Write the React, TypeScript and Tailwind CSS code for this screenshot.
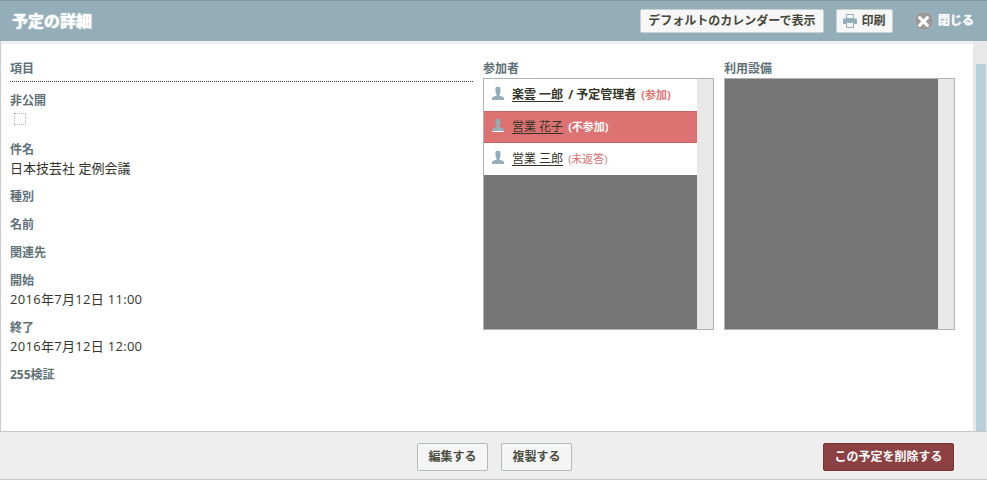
const jp = "font-['Open_Sans','Noto_Sans_CJK_JP',sans-serif]";

function Field({ label, value, date }: { label: string; value?: string; date?: boolean }) {
  return (
    <div className="mb-[9px]">
      <div className="h-[19px] text-[12px] leading-[19px] font-bold text-[#5e6f78]">{label}</div>
      {value && (
        <div className={`h-[19px] text-[13px] leading-[19px] text-[#33352a] ${date ? "tracking-[0.3px]" : ""}`}>
          {value}
        </div>
      )}
    </div>
  );
}

function PersonIcon({ active }: { active?: boolean }) {
  return (
    <svg
      viewBox="0 0 12 13"
      className={`w-3 h-[13px] shrink-0 -mt-[3px] fill-[#93adb9] ${active ? "border-b border-white" : ""}`}
    >
      <path d="M4 0h4l0.500 1v4.500L7.500 7.500v1.300l3.500 1 1 1V13H0v-2.200l1-1 3.500-1V7.500L3.500 5.500V1z" />
    </svg>
  );
}

function Attendee({
  name,
  role,
  status,
  active,
}: {
  name: string;
  role?: string;
  status: string;
  active?: boolean;
}) {
  return (
    <div
      className={`h-8 flex items-center pl-2 text-[12px] ${
        active ? "bg-[#dc7271] border-y border-[#c96463]" : "bg-white"
      }`}
    >
      <PersonIcon active={active} />
      <span
        className={`ml-[8px] underline underline-offset-2 text-[#33352a] ${role ? "font-bold" : ""}`}
      >
        {name}
      </span>
      {role && <span className="ml-[5px] font-bold text-[#33352a]">/ {role}</span>}
      <span
        className={`ml-[5px] text-[11px] ${active ? "text-white font-bold" : "text-[#dc7271]"} ${
          role ? "font-bold" : ""
        }`}
      >
        {status}
      </span>
    </div>
  );
}

function ListBox({ label, children }: { label: string; children?: React.ReactNode }) {
  return (
    <div className="w-[231px]">
      <div className="h-[19px] text-[12px] leading-[19px] font-bold text-[#5e6f78]">{label}</div>
      <div className="h-[252px] flex border border-[#b0b3b3]">
        <div className="flex-1 bg-[#757575]">{children}</div>
        <div className="w-[16px] bg-[#e8e8e8]" />
      </div>
    </div>
  );
}

function Button({ children, danger }: { children: React.ReactNode; danger?: boolean }) {
  return (
    <button
      className={`h-[28px] rounded-[2px] border text-[12px] font-bold flex items-center justify-center ${
        danger
          ? "w-[131px] bg-[#8b4142] border-[#7a3334] text-white"
          : "w-[71px] bg-[#f5f5f5] border-[#b5baba] text-[#4a4d3e]"
      }`}
    >
      {children}
    </button>
  );
}

export default function App() {
  return (
    <div className={`${jp} w-[987px] h-[480px] flex flex-col overflow-hidden bg-white`}>
      <header className="h-[41px] shrink-0 flex items-center pl-3 bg-[#93adb9] border-t border-[#7f97a2]">
        <h1 className="text-[16px] font-bold text-white [text-shadow:0_0_1px_#fff,0_0_2px_rgba(255,255,255,0.7)]">
          予定の詳細
        </h1>
        <button className="ml-auto w-[184px] h-6 bg-[#f6f6f6] border border-[#c9d1d3] rounded-[2px] text-[12px] font-bold text-[#44463a]">
          デフォルトのカレンダーで表示
        </button>
        <button className="ml-[12px] w-[57px] h-6 flex items-center justify-center gap-[4px] bg-[#f6f6f6] border border-[#c9d1d3] rounded-[2px] text-[12px] font-bold text-[#44463a]">
          <svg viewBox="0 0 14 14" className="w-[14px] h-[14px]">
            <path d="M3.500 0.500h7v4h-7z" fill="none" stroke="#93adb9" />
            <path d="M1 4.500h12a1 1 0 0 1 1 1V10h-3V8H3v2H0V5.500a1 1 0 0 1 1-1z" fill="#93adb9" />
            <path d="M3.500 8.500h7v5h-7z" fill="none" stroke="#93adb9" />
          </svg>
          印刷
        </button>
        <div className="ml-[21px] w-5 h-5 rounded-full bg-[#9a9a9a] border border-[#a9b5ba] flex items-center justify-center shrink-0">
          <svg viewBox="0 0 10 10" className="w-[11px] h-[11px]">
            <path d="M1.500 1.500l7 7M8.500 1.500l-7 7" stroke="#fff" strokeWidth="2.800" strokeLinecap="round" />
          </svg>
        </div>
        <span className="ml-[4px] mr-[13px] text-[12px] font-bold text-white [text-shadow:0_0_1px_#fff]">
          閉じる
        </span>
      </header>

      <div className="flex-1 flex min-h-0 border-l border-[#cccccc]">
        <div className="flex-1 min-w-0">
          <div className="h-[3px] bg-[#f0f0f0]" />
          <main className="flex pl-[9px] pt-[15px]">
            <section className="w-[463px]">
              <div className="h-[23px] border-b border-dotted border-[#444] text-[12px] leading-[19px] font-bold text-[#5e6f78]">
                項目
              </div>
              <div className="mt-[9px] mb-[15px]">
                <div className="h-[19px] text-[12px] leading-[19px] font-bold text-[#5e6f78]">非公開</div>
                <div className="mt-[3px] ml-[4px] w-3 h-3 border border-dotted border-[#b5b5b5]" />
              </div>
              <Field label="件名" value="日本技芸社 定例会議" />
              <Field label="種別" />
              <Field label="名前" />
              <Field label="関連先" />
              <Field label="開始" value="2016年7月12日 11:00" date />
              <Field label="終了" value="2016年7月12日 12:00" date />
              <Field label="255検証" />
            </section>
            <section className="ml-[10px] flex gap-[10px]">
              <ListBox label="参加者">
                <Attendee name="楽雲 一郎" role="予定管理者" status="(参加)" />
                <Attendee name="営業 花子" status="(不参加)" active />
                <Attendee name="営業 三郎" status="(未返答)" />
              </ListBox>
              <ListBox label="利用設備" />
            </section>
          </main>
        </div>
        <div className="w-[14px] shrink-0 bg-[#e8e8e8] pt-[23px] pl-[3px] pr-px">
          <div className="h-full bg-[#b7d0dc]" />
        </div>
      </div>

      <footer className="h-[49px] shrink-0 flex items-center pt-[2px] pl-[417px] pr-[33px] gap-[13px] bg-[#eeeeee] border-y border-[#c8c8c8]">
        <Button>編集する</Button>
        <Button>複製する</Button>
        <div className="ml-auto">
          <Button danger>この予定を削除する</Button>
        </div>
      </footer>
    </div>
  );
}
